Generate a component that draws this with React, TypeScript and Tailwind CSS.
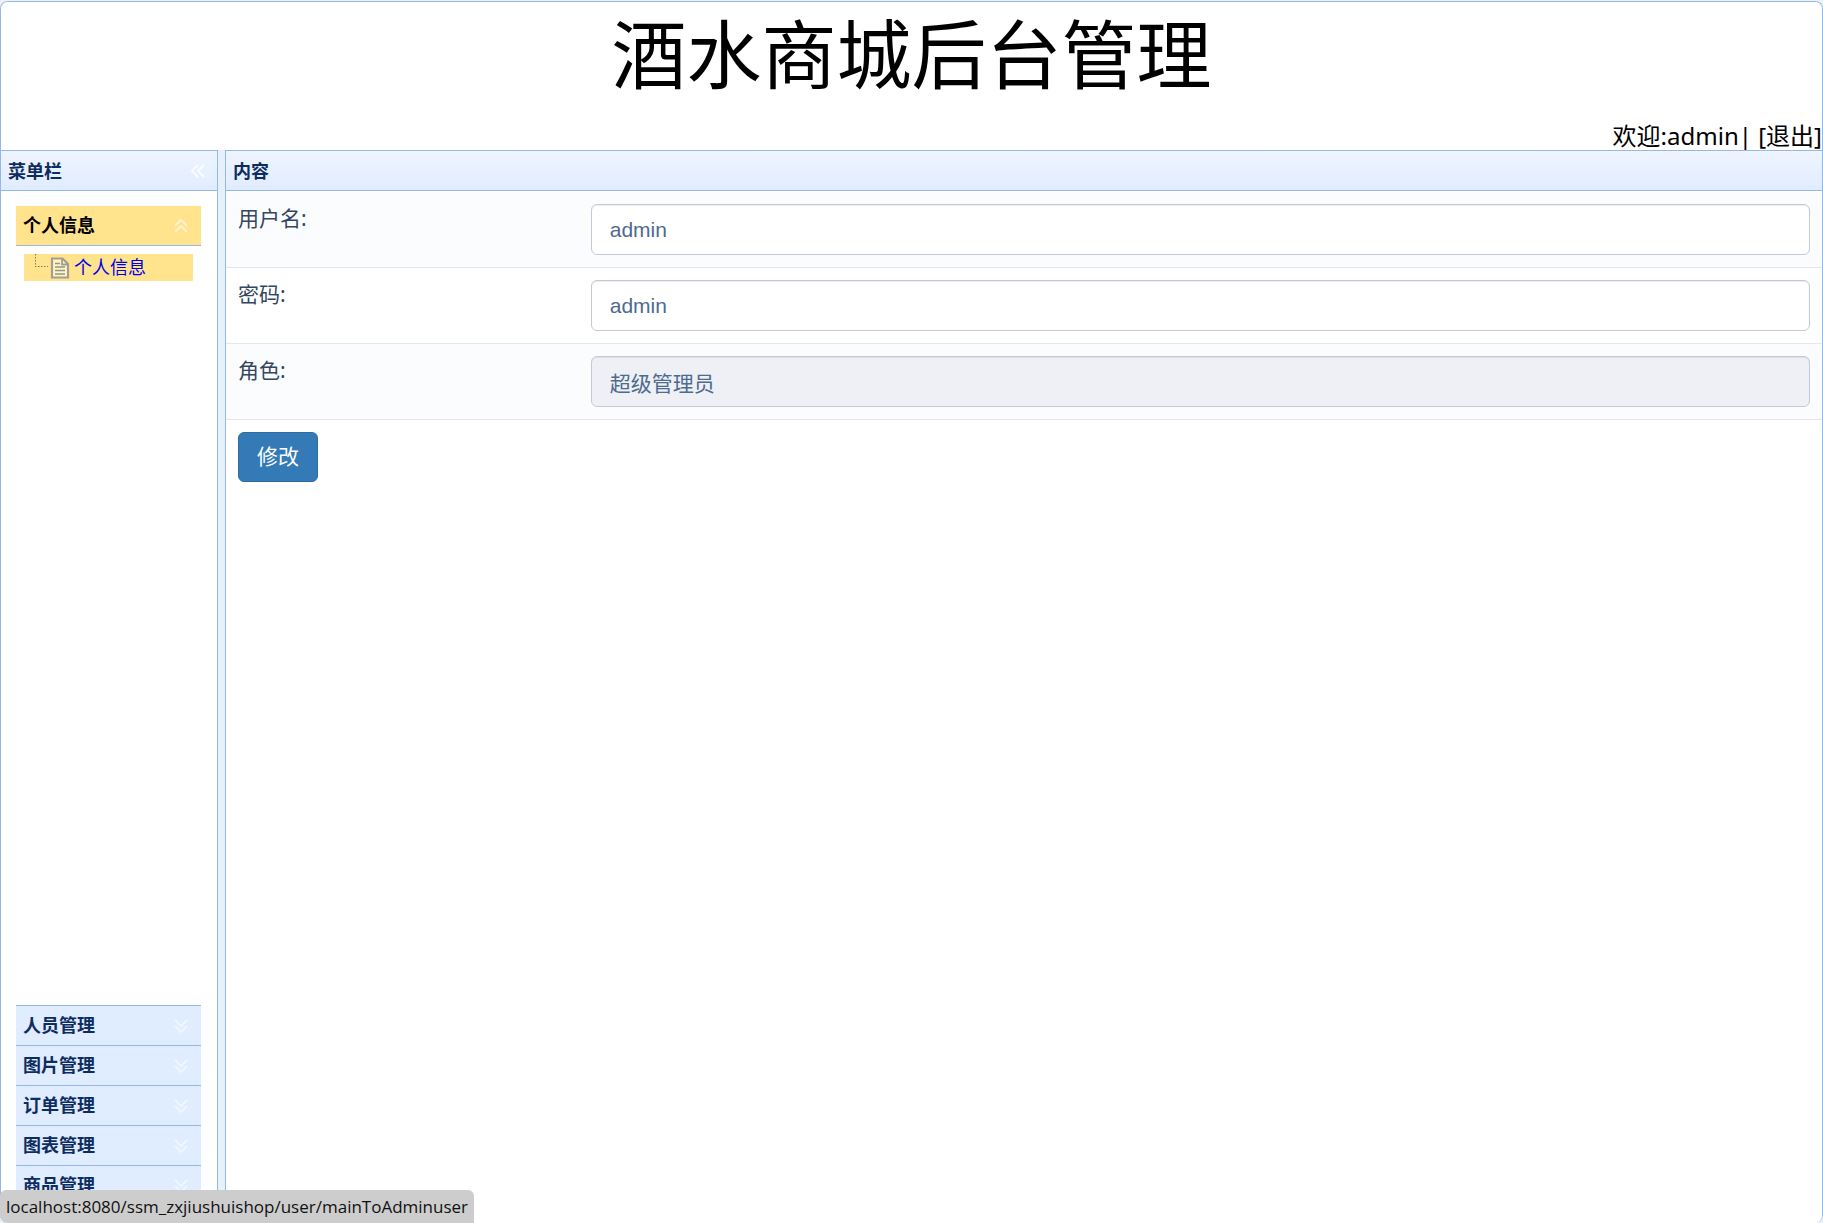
import { useState } from "react";

const menus = ["人员管理", "图片管理", "订单管理", "图表管理", "商品管理"];

const labelClass = "text-[21px] leading-[30px] text-[#34475e]";
const inputClass =
  "block h-[51px] w-full rounded-md border border-[#c2cad8] bg-white px-[18px] font-['Liberation_Sans','Noto_Sans_CJK_SC',sans-serif] text-[21px] text-[#4d6b8f] shadow-[inset_0_1px_1px_rgba(0,0,0,0.075)] outline-none disabled:bg-[#eef0f5] disabled:text-[#4d6b8f]";

const chevronPaths = {
  up: "M2 8l6-6 6 6M2 14l6-6 6 6",
  down: "M2 2l6 6 6-6M2 8l6 6 6-6",
  left: "M8 2L2 8l6 6M14 2L8 8l6 6",
};

function Chevrons({ direction, className }) {
  return (
    <svg width="16" height="16" viewBox="0 0 16 16" fill="none" stroke="currentColor" strokeWidth="2" className={className}>
      <path d={chevronPaths[direction]} />
    </svg>
  );
}

function FileIcon() {
  return (
    <svg width="20" height="22" viewBox="0 0 20 22" fill="none" className="shrink-0">
      <path d="M2 1.5h10.5l5.5 5.5v13.500H2z" fill="#fff6b8" stroke="#a39c98" strokeWidth="2.200" />
      <path d="M12 2v5.500h6" stroke="#a39c98" strokeWidth="1.800" />
      <path d="M5 6.500h5M5 10h10M5 13.500h10M5 17h10" stroke="#8f959c" strokeWidth="1.600" />
    </svg>
  );
}

function TreeLine() {
  return (
    <svg width="26" height="27" viewBox="0 0 26 27" fill="none" className="shrink-0">
      <path d="M11.500 0v13M11 12.500h13" stroke="#857b5c" strokeDasharray="1.500 1.500" />
    </svg>
  );
}

function Header() {
  return (
    <header className="flex h-[148px] shrink-0 flex-col justify-between bg-white text-black">
      <h1 className="text-center text-[75px] leading-[104px]">酒水商城后台管理</h1>
      <div className="text-right text-[24px] leading-7">
        欢迎:admin| <a href="#logout">[退出]</a>
      </div>
    </header>
  );
}

function PanelTitle({ title, children }) {
  return (
    <div className="flex h-[41px] shrink-0 items-center justify-between border-y border-[#95b8e7] bg-linear-to-b from-[#eff5ff] to-[#e0ecff] px-[7px]">
      <h2 className="text-[18px] leading-6 font-bold text-[#0e2d5f]">{title}</h2>
      {children}
    </div>
  );
}

function Sidebar() {
  return (
    <aside className="flex w-[217px] shrink-0 flex-col border-r border-[#95b8e7] bg-white">
      <PanelTitle title="菜单栏">
        <button type="button" aria-label="收起" className="px-1">
          <Chevrons direction="left" className="text-[#fafcff]" />
        </button>
      </PanelTitle>
      <nav className="flex min-h-0 flex-1 flex-col pt-[15px] pr-4 pl-[15px]">
        <button
          type="button"
          className="flex h-10 shrink-0 items-center justify-between border-b border-[#95b8e7] bg-[#ffe48d] pr-3 pl-[7px] text-[18px] font-bold text-black"
        >
          个人信息
          <Chevrons direction="up" className="text-[#fff3cc]" />
        </button>
        <div className="flex-1 p-2">
          <a href="#profile" className="flex h-[27px] items-center bg-[#ffe48d] text-[18px] text-[#0000ee]">
            <TreeLine />
            <FileIcon />
            <span className="pl-1">个人信息</span>
          </a>
        </div>
        <div className="h-[218px] shrink-0 overflow-hidden border-t border-[#95b8e7]">
          {menus.map((name) => (
            <button
              key={name}
              type="button"
              className="flex h-10 w-full items-center justify-between border-b border-[#95b8e7] bg-[#e0ecff] pr-3 pl-[7px] text-[18px] font-bold text-[#0e2d5f]"
            >
              {name}
              <Chevrons direction="down" className="text-[#f0f6ff]" />
            </button>
          ))}
        </div>
      </nav>
    </aside>
  );
}

function UserForm() {
  const [username, setUsername] = useState("admin");
  const [password, setPassword] = useState("admin");
  const rowClass = "grid grid-cols-[22.1%_1fr] border-b border-[#e3e8ee] odd:bg-[#fbfcfe]";

  return (
    <form className="pt-px" onSubmit={(e) => e.preventDefault()}>
      <div className={rowClass}>
        <label htmlFor="username" className={`${labelClass} px-3 py-[11px]`}>用户名:</label>
        <div className="p-3">
          <input id="username" className={inputClass} value={username} onChange={(e) => setUsername(e.target.value)} />
        </div>
      </div>
      <div className={rowClass}>
        <label htmlFor="password" className={`${labelClass} px-3 py-[11px]`}>密码:</label>
        <div className="p-3">
          <input id="password" className={inputClass} value={password} onChange={(e) => setPassword(e.target.value)} />
        </div>
      </div>
      <div className={rowClass}>
        <label htmlFor="role" className={`${labelClass} px-3 py-[11px]`}>角色:</label>
        <div className="p-3">
          <input id="role" className={inputClass} value="超级管理员" disabled />
        </div>
      </div>
      <div className="p-3">
        <button
          type="submit"
          className="h-[50px] w-20 rounded-md border border-[#2e6da4] bg-[#337ab7] text-[21px] text-white"
        >
          修改
        </button>
      </div>
    </form>
  );
}

export default function App() {
  return (
    <div className="h-screen bg-[#eef1f3] pt-px font-['Noto_Sans','Noto_Sans_CJK_SC',sans-serif]">
      <div className="flex h-full flex-col overflow-hidden rounded-lg border-x border-t border-[#95b8e7] bg-white">
        <Header />
        <div className="flex min-h-0 flex-1 bg-[#e6f0fa]">
          <Sidebar />
          <main className="ml-[7px] flex min-w-0 flex-1 flex-col border-l border-[#95b8e7] bg-white">
            <PanelTitle title="内容" />
            <UserForm />
          </main>
        </div>
      </div>
      <div className="fixed bottom-0 left-0 h-[33px] w-[474px] rounded-t-md rounded-bl-lg bg-[#cdcdcd] pl-[6px] font-['Open_Sans',sans-serif] text-[17px] leading-[33px] whitespace-nowrap text-[#111]">
        localhost:8080/ssm_zxjiushuishop/user/mainToAdminuser
      </div>
    </div>
  );
}
